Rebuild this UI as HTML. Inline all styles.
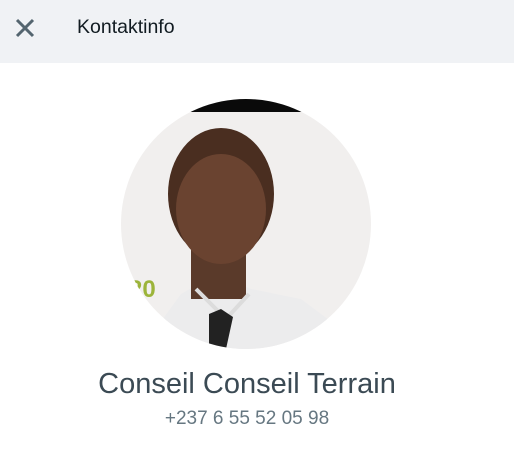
<!DOCTYPE html>
<html><head><meta charset="utf-8"><style>
body{margin:0;width:514px;height:453px;background:#fff;font-family:"Liberation Sans",sans-serif;overflow:hidden;position:relative}
.hdr{position:absolute;left:0;top:0;width:514px;height:63px;background:#f0f2f5}
.t{position:absolute;left:77px;top:16px;font-size:19.5px;color:#111b21}
.name{position:absolute;left:0;width:494px;text-align:center;top:368px;font-size:29px;color:#3b4a54}
.ph{position:absolute;left:0;width:494px;text-align:center;top:408px;font-size:19px;color:#667781}
</style></head><body>
<div class="hdr">
<svg style="position:absolute;left:14px;top:17px" width="22" height="22" viewBox="0 0 22 22"><path d="M3 3L19 19M19 3L3 19" stroke="#54656f" stroke-width="3"/></svg>
<div class="t">Kontaktinfo</div>
</div>
<svg style="position:absolute;left:121px;top:99px" width="250" height="250" viewBox="0 0 250 250">
<defs><clipPath id="c"><circle cx="125" cy="125" r="125"/></clipPath></defs>
<g clip-path="url(#c)">
<rect width="250" height="250" fill="#f1efee"/>
<rect x="0" y="0" width="250" height="13" fill="#0a0a0a"/>
<path d="M20 250 L60 195 L95 175 L130 190 L180 200 L220 230 L250 250 Z" fill="#ececed"/>
<rect x="70" y="130" width="55" height="70" fill="#5a3a2a"/>
<ellipse cx="100" cy="95" rx="53" ry="66" fill="#4a2e20"/>
<ellipse cx="100" cy="110" rx="45" ry="55" fill="#6a4330"/>
<path d="M75 190 L105 220 L128 195" fill="none" stroke="#dcdcdc" stroke-width="4"/>
<path d="M88 215 L100 210 L112 218 L105 250 L88 250 Z" fill="#222"/>
<text x="8" y="198" font-family="Liberation Sans" font-weight="bold" font-size="24" fill="#9cb43a">20</text>
</g></svg>
<div class="name">Conseil Conseil Terrain</div>
<div class="ph">+237 6 55 52 05 98</div>
</body></html>
